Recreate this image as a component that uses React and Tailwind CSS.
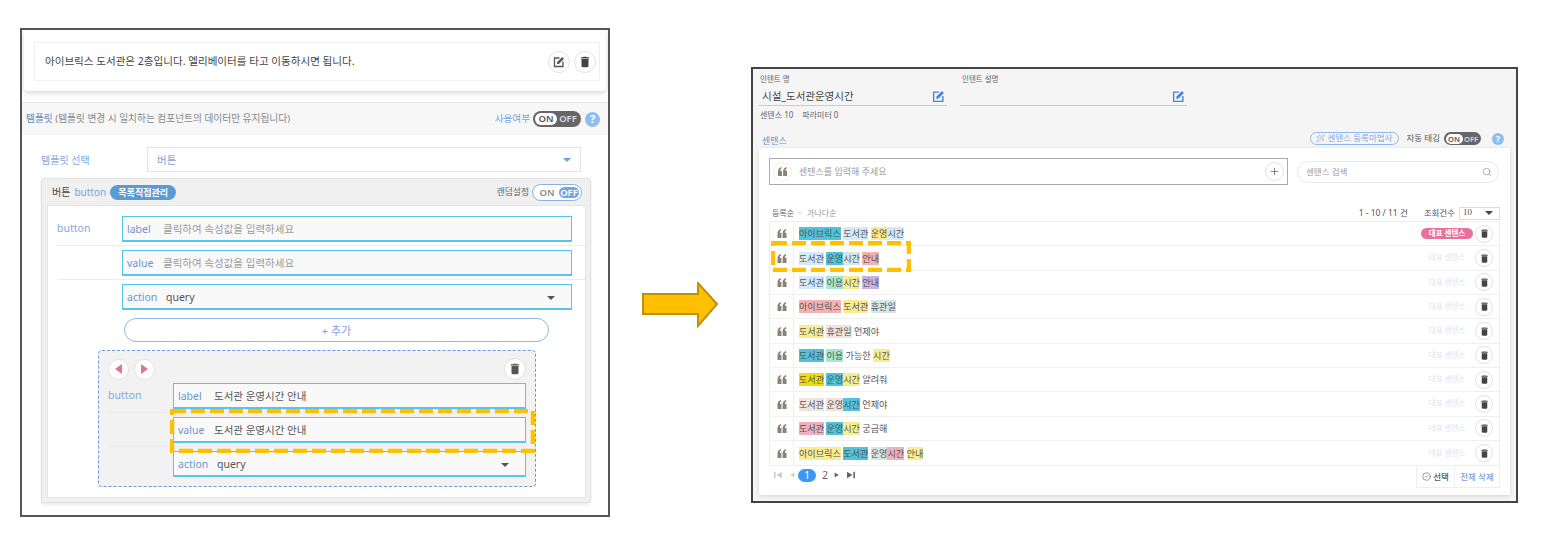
import { Search, WandSparkles, CircleCheck, Plus, ChevronDown } from 'lucide-react'

const teal = 'bg-[#4fc3d9]'
const sky = 'bg-[#d6e9f8]'
const yellow = 'bg-[#faec8f]'
const red = 'bg-[#f4b3b3]'
const mint = 'bg-[#a6e8cd]'
const purple = 'bg-[#c9b3e1]'
const slate = 'bg-[#d6e5e6]'
const beige = 'bg-[#efe4dd]'
const gold = 'bg-[#f3dc0a]'
const pink = 'bg-[#efb1bc]'

const sentences = [
  [['아이브릭스', teal], ' ', ['도서관', sky], ' ', ['운영', yellow], ['시간', sky]],
  [['도서관', sky], ' ', ['운영', teal], ['시간', slate], ' ', ['안내', red]],
  [['도서관', sky], ' ', ['이용', mint], ['시간', yellow], ' ', ['안내', purple]],
  [['아이브릭스', red], ' ', ['도서관', yellow], ' ', ['휴관일', slate]],
  [['도서관', yellow], ' ', ['휴관일', beige], ' 언제야'],
  [['도서관', teal], ' ', ['이용', mint], ' 가능한 ', ['시간', yellow]],
  [['도서관', gold], ' ', ['운영', teal], ['시간', yellow], ' 알려줘'],
  [['도서관', beige], ' ', ['운영', beige], ['시간', teal], ' 언제야'],
  [['도서관', pink], ' ', ['운영', teal], ['시간', yellow], ' 궁금해'],
  [['아이브릭스', yellow], ' ', ['도서관', teal], ' ', ['운영', slate], ['시간', pink], ' ', ['안내', yellow]],
]

function TrashIcon({ className }) {
  return (
    <svg viewBox="0 0 24 24" className={className} fill="currentColor">
      <path d="M6 19c0 1.1.9 2 2 2h8c1.1 0 2-.9 2-2V7H6v12zM19 4h-3.5l-1-1h-5l-1 1H5v2h14V4z" />
    </svg>
  )
}

function EditIcon({ className }) {
  return (
    <svg viewBox="0 0 24 24" className={className} fill="none" stroke="currentColor">
      <path d="M13 4H3v17h17V11" strokeWidth="2.6" />
      <path d="M8 16v-3.6L18.4 2 22 5.6 11.6 16z" fill="currentColor" stroke="none" />
    </svg>
  )
}

function QuoteIcon({ className }) {
  return (
    <svg viewBox="0 0 12 12" className={className} fill="currentColor">
      <path d="M0 12V6C0 3 1.3 1 4.4 0L5 1.6C3.6 2.3 3 3.2 3 5H5.2V12Z" />
      <path d="M6.8 12V6C6.8 3 8.1 1 11.2 0L11.8 1.6C10.4 2.3 9.8 3.2 9.8 5H12V12Z" />
    </svg>
  )
}

function CircleBtn({ className, children }) {
  return (
    <span className={`flex items-center justify-center rounded-full border border-[#e2e2e2] bg-white shrink-0 ${className}`}>
      {children}
    </span>
  )
}

function HelpDot({ className }) {
  return (
    <span className={`flex items-center justify-center rounded-full bg-[#90bdf0] text-white font-bold ${className}`}>?</span>
  )
}

function Caret({ className }) {
  return <span className={`w-0 h-0 border-x-[4px] border-x-transparent border-t-[4px] ${className}`} />
}

function Field({ label, children }) {
  return (
    <div className="flex items-center h-[26px] border border-[#56c5ea] border-b-2 bg-[#f9f9f9] pl-[4px] pr-[16px] pt-[2px] text-[10.5px]">
      <span className="w-[36px] shrink-0 text-[#6d94cf]">{label}</span>
      {children}
    </div>
  )
}

function FormRows({ fieldWidth, values }) {
  return (
    <div className="flex flex-col">
      {values.map((row, i) => (
        <div key={row.label} className={`flex items-start ${i < 2 ? 'h-[30px] mb-[4px] border-b border-[#ececec]' : 'h-[34px]'}`}>
          <span className="w-[65px] shrink-0 text-[10.5px] leading-[24px] text-[#7fa8e0]">{i === 0 ? 'button' : ''}</span>
          <div className={fieldWidth}>
            <Field label={row.label}>
              {row.select ? (
                <span className="flex flex-1 items-center justify-between text-[#555] pl-[3px]">
                  {row.text}
                  <Caret className="border-t-[#555]" />
                </span>
              ) : (
                <span className={row.hint ? 'text-[#9a9a9a]' : 'text-[#555]'}>{row.text}</span>
              )}
            </Field>
          </div>
        </div>
      ))}
    </div>
  )
}

function Dash({ className, w, h }) {
  return (
    <svg className={`absolute ${className}`} width={w} height={h} fill="none">
      <rect x="2" y="2" width={w - 4} height={h - 4} stroke="#ffc000" strokeWidth="4.5" strokeDasharray="14 5" />
    </svg>
  )
}

function LeftWindow() {
  const hint = '클릭하여 속성값을 입력하세요'
  const guide = '도서관 운영시간 안내'
  return (
    <div className="w-[590px] h-[489px] shrink-0 mt-[28px] border-2 border-[#555] bg-white overflow-hidden">
      <div className="mx-[2px] h-[61px] pt-[12px] pl-[10px] rounded-b shadow-[0_2px_5px_rgba(0,0,0,0.16)]">
        <div className="w-[566px] h-[39px] border border-[#f0f0f0] flex items-center justify-between pl-[10px] pr-[3px]">
          <span className="text-[10.55px] text-[#444] pt-[1px]">아이브릭스 도서관은 2층입니다. 엘리베이터를 타고 이동하시면 됩니다.</span>
          <div className="flex gap-[4px]">
            <CircleBtn className="w-[22px] h-[22px] text-[#555]"><EditIcon className="w-[12px] h-[12px]" /></CircleBtn>
            <CircleBtn className="w-[22px] h-[22px] text-[#444]"><TrashIcon className="w-[14px] h-[14px]" /></CircleBtn>
          </div>
        </div>
      </div>

      <div className="mt-[11px] h-[33px] border-t border-[#e6e6e6] bg-[#f7f7f7] flex items-center justify-between pl-[4px] pr-[8px]">
        <span className="text-[9.7px] text-[#888]"><span className="text-[#5f87b8]">템플릿</span> (템플릿 변경 시 일치하는 컴포넌트의 데이터만 유지됩니다)</span>
        <div className="flex items-center">
          <span className="text-[9.6px] text-[#6ea4d8] mr-[3px] pt-[1px]">사용여부</span>
          <span className="flex w-[48px] h-[16px] rounded-full bg-[#666] p-[2px] text-[9.5px] font-semibold leading-[12px]">
            <span className="w-[22px] rounded-full bg-white text-[#555] text-center">ON</span>
            <span className="flex-1 text-[#ddd] text-center">OFF</span>
          </span>
          <HelpDot className="ml-[4px] w-[15px] h-[15px] text-[11px]" />
        </div>
      </div>

      <div className="pl-[19px] pt-[12px]">
        <div className="flex items-center h-[25px]">
          <span className="w-[106px] text-[10px] text-[#7fa8e0] pt-[2px]">템플릿 선택</span>
          <div className="w-[434px] h-[25px] border border-[#e4e4e4] flex items-center justify-between pl-[9px] pr-[9px]">
            <span className="text-[10.5px] text-[#7fa0d8] pt-[3px]">버튼</span>
            <Caret className="border-t-[#6f9bd8]" />
          </div>
        </div>

        <div className="w-[550px] h-[325px] mt-[6px] rounded-[3px] bg-[#f0f0f0] border border-[#e2e2e2] shadow-[0_2px_3px_rgba(0,0,0,0.08)] px-[5px]">
          <div className="h-[26px] flex items-center justify-between pl-[5px] pr-[3px] pt-[1px]">
            <div className="flex items-center text-[10px] text-[#444]">
              버튼
              <span className="ml-[4px] text-[10px] text-[#7f9fe0]">button</span>
              <span className="ml-[4px] h-[15px] w-[66px] rounded-full bg-[#5b9bd5] text-[9px] leading-[15px] font-semibold text-white text-center">목록직접관리</span>
            </div>
            <div className="flex items-center">
              <span className="text-[8.8px] text-[#666] mr-[3px]">랜덤설정</span>
              <span className="flex w-[50px] h-[17px] rounded-full bg-white border border-[#8eaedb] p-[2px] text-[9.5px] font-semibold leading-[11px]">
                <span className="w-[24px] text-[#888] text-center">ON</span>
                <span className="flex-1 rounded-full bg-[#76a5e0] text-white text-center">OFF</span>
              </span>
            </div>
          </div>

          <div className="w-[539px] h-[293px] bg-white border border-[#d8e6f6] pl-[9px] pt-[10px]">
            <FormRows
              fieldWidth="w-[450px]"
              values={[
                { label: 'label', text: hint, hint: true },
                { label: 'value', text: hint, hint: true },
                { label: 'action', text: 'query', select: true },
              ]}
            />
            <button className="block ml-[67px] w-[425px] h-[24px] pt-[2px] rounded-full border border-[#8fb8ea] bg-white text-[11px] text-[#7fa0e0]">+ 추가</button>

            <div className="ml-[41px] mt-[8px] w-[438px] h-[137px] rounded-[4px] border border-dashed border-[#6a9ae0] bg-[#f2f2f2] pl-[9px] pr-[9px] pt-[7px]">
              <div className="flex items-center justify-between h-[22px]">
                <div className="flex gap-[5px]">
                  <CircleBtn className="w-[21px] h-[21px]"><span className="w-0 h-0 border-y-[5px] border-y-transparent border-r-[7px] border-r-[#e0709c]" /></CircleBtn>
                  <CircleBtn className="w-[21px] h-[21px]"><span className="w-0 h-0 border-y-[5px] border-y-transparent border-l-[7px] border-l-[#e0709c]" /></CircleBtn>
                </div>
                <CircleBtn className="w-[22px] h-[22px] text-[#555]"><TrashIcon className="w-[14px] h-[14px]" /></CircleBtn>
              </div>
              <div className="mt-[3px]">
                <FormRows
                  fieldWidth="w-[353px]"
                  values={[
                    { label: 'label', text: guide },
                    { label: 'value', text: guide },
                    { label: 'action', text: 'query', select: true },
                  ]}
                />
              </div>
            </div>
          </div>
        </div>
      </div>
    </div>
  )
}

function Sentence({ parts }) {
  return (
    <div className="flex items-center text-[9.1px] leading-[13px] text-[#555] whitespace-pre">
      {parts.map((p, i) =>
        typeof p === 'string' ? (
          <span key={i}>{p}</span>
        ) : (
          <span key={i} className={p[1]}>{p[0]}</span>
        )
      )}
    </div>
  )
}

function RightWindow() {
  return (
    <div className="w-[767px] h-[436px] shrink-0 mt-[67px] border-2 border-[#444] bg-[#f5f5f5] overflow-hidden">
      <div className="h-[47px] pl-[6px] pt-[5px] flex">
        <div className="w-[188px]">
          <div className="text-[7.5px] leading-[10px] text-[#666] pl-[1px]">인텐트 명</div>
          <div className="mt-[3px] h-[19px] border-b border-[#ccc] flex items-center justify-between pl-[3px] pr-[2px]">
            <span className="text-[10.5px] text-[#444] pt-[2px]">시설_도서관운영시간</span>
            <EditIcon className="w-[13px] h-[13px] text-[#4a86d8]" />
          </div>
        </div>
        <div className="w-[227px] ml-[13px]">
          <div className="text-[7.5px] leading-[10px] text-[#666] pl-[2px]">인텐트 설명</div>
          <div className="mt-[3px] h-[19px] border-b border-[#ccc] flex items-center justify-end pr-[2px]">
            <EditIcon className="w-[13px] h-[13px] text-[#4a86d8]" />
          </div>
        </div>
      </div>
      <div className="pl-[7px] text-[8px] leading-[12px] text-[#666] mt-[-7px] mb-[9px] flex gap-[9px]">
        <span>센텐스 10</span><span>파라미터 0</span>
      </div>

      <div className="h-[17px] flex items-center justify-between pl-[9px] pr-[12px]">
        <span className="text-[9px] text-[#6f8fc8] pt-[5px]">센텐스</span>
        <div className="flex items-center">
          <span className="flex items-center justify-center gap-[3px] w-[89px] h-[13px] rounded-full border border-[#8fb8ea] text-[8.5px] text-[#7fa8e0]">
            <WandSparkles className="w-[9px] h-[9px]" strokeWidth={1.5} />
            센텐스 등록마법사
          </span>
          <span className="ml-[8px] text-[8.5px] text-[#555]">자동 태깅</span>
          <span className="ml-[4px] flex w-[37px] h-[13px] rounded-full bg-[#666] p-[1.5px] text-[7.5px] font-semibold leading-[10px]">
            <span className="w-[17px] rounded-full bg-white text-[#555] text-center">ON</span>
            <span className="flex-1 text-[#ddd] text-center">OFF</span>
          </span>
          <HelpDot className="ml-[11px] w-[12px] h-[12px] text-[9px]" />
        </div>
      </div>

      <div className="ml-[6px] w-[751px] h-[347px] mt-[1px] bg-white shadow-[0_1px_4px_rgba(0,0,0,0.15)] pl-[10px] pr-[10px] pt-[10px]">
        <div className="flex items-center h-[27px]">
          <div className="w-[519px] h-[27px] border border-[#aaa] flex items-center justify-between pl-[3px] pr-[3px]">
            <div className="flex items-center">
              <CircleBtn className="w-[19px] h-[19px] text-[#8a8178] border-[#eee]"><QuoteIcon className="w-[9px] h-[9px]" /></CircleBtn>
              <span className="ml-[7px] text-[9px] text-[#999]">센텐스를 입력해 주세요</span>
            </div>
            <CircleBtn className="w-[19px] h-[19px] text-[#555]"><Plus className="w-[11px] h-[11px]" strokeWidth={1.5} /></CircleBtn>
          </div>
          <div className="ml-[9px] w-[202px] h-[22px] rounded-full border border-[#e8e8e8] flex items-center justify-between pl-[8px] pr-[6px]">
            <span className="text-[8.5px] text-[#999] pt-[1px]">센텐스 검색</span>
            <Search className="w-[10px] h-[10px] text-[#7fa8e0]" strokeWidth={2} />
          </div>
        </div>

        <div className="mt-[21px] h-[14px] flex items-center justify-between pl-[3px]">
          <div className="flex items-center text-[8px] text-[#666]">
            등록순
            <ChevronDown className="w-[8px] h-[8px] ml-[2px] text-[#aaa]" strokeWidth={1.5} />
            <span className="ml-[3px] text-[#999]">가나다순</span>
          </div>
          <div className="flex items-center text-[8.5px] text-[#555]">
            <span>1 - 10 / 11 건</span>
            <span className="ml-[16px]">조회건수</span>
            <span className="ml-[4px] w-[41px] h-[13px] border border-[#ddd] flex items-center justify-between pl-[3px] pr-[6px] font-['Liberation_Serif',serif] text-[9px]">
              10
              <Caret className="border-t-[#444]" />
            </span>
          </div>
        </div>

        <div className="mt-[1px] w-[731px] border border-[#eee]">
          {sentences.map((parts, i) => (
            <div key={i} className={`flex items-center h-[24.35px] ${i < 9 ? 'border-b border-[#f0f0f0]' : ''}`}>
              <div className="w-[24px] h-full shrink-0 border-r border-[#f0f0f0] flex items-center justify-center text-[#8a8178]">
                <QuoteIcon className="w-[10px] h-[9px]" />
              </div>
              <div className="flex-1 pl-[5px]"><Sentence parts={parts} /></div>
              {i === 0 ? (
                <span className="w-[52px] h-[11px] rounded-full bg-[#e8709a] text-[7.5px] leading-[11px] font-semibold text-white text-center">대표 센텐스</span>
              ) : (
                <span className="w-[52px] text-[7.5px] text-[#e0e2f2] text-center">대표 센텐스</span>
              )}
              <CircleBtn className="ml-[2px] mr-[6px] w-[18px] h-[18px] text-[#444]"><TrashIcon className="w-[11px] h-[11px]" /></CircleBtn>
            </div>
          ))}
        </div>

        <div className="w-[731px] flex items-start justify-between">
          <div className="flex items-center h-[18px] pl-[5px] text-[#666]">
            <svg viewBox="0 0 10 10" className="w-[8px] h-[8px] text-[#ccc]" fill="currentColor"><path d="M0 1h2v8H0zM10 1v8L3 5z" /></svg>
            <svg viewBox="0 0 10 10" className="ml-[7px] w-[6px] h-[8px] text-[#ccc]" fill="currentColor"><path d="M9 1v8L2 5z" /></svg>
            <span className="ml-[3px] w-[18px] h-[13px] rounded-full bg-[#3b99f5] text-white text-[10px] leading-[13px] text-center">1</span>
            <span className="ml-[6px] text-[10.5px]">2</span>
            <svg viewBox="0 0 10 10" className="ml-[6px] w-[6px] h-[8px]" fill="currentColor"><path d="M1 1v8l7-4z" /></svg>
            <svg viewBox="0 0 10 10" className="ml-[7px] w-[8px] h-[8px]" fill="currentColor"><path d="M0 1l7 4-7 4zM8 1h2v8H8z" /></svg>
          </div>
          <div className="flex h-[22px] border border-[#eee] border-t-0 text-[8.5px] font-medium">
            <span className="w-[38px] flex items-center justify-center gap-[2px] border-r border-[#eee] text-[#555]">
              <CircleCheck className="w-[9px] h-[9px]" strokeWidth={1.5} />선택
            </span>
            <span className="w-[44px] flex items-center justify-center text-[#6fa3e0]">전체 삭제</span>
          </div>
        </div>
      </div>
    </div>
  )
}

export default function App() {
  return (
    <div className="relative w-[1546px] h-[539px] overflow-hidden bg-white flex items-start pl-[20px] font-['Noto_Sans','Noto_Sans_CJK_KR',sans-serif]">
      <LeftWindow />
      <svg className="shrink-0 ml-[32px] mt-[282px]" width="77" height="46" viewBox="0 0 77 46">
        <path d="M1 12H56V1L75 22 56 44V32H1Z" fill="#ffc000" stroke="#bf9000" strokeWidth="2" />
      </svg>
      <div className="ml-[32px]"><RightWindow /></div>
      <Dash className="left-[170px] top-[409px]" w={365} h={44} />
      <Dash className="left-[771px] top-[241px]" w={140} h={31} />
    </div>
  )
}
